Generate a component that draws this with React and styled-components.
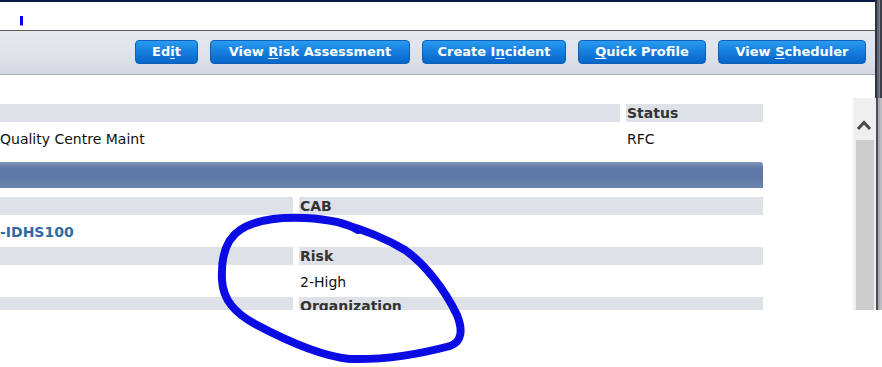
import React from "react";
import styled, { createGlobalStyle } from "styled-components";

const Global = createGlobalStyle`
  html, body { margin: 0; padding: 0; background: #ffffff; }
  body { font-family: "DejaVu Sans", Verdana, sans-serif; }
`;

const Screen = styled.div`
  position: relative;
  width: 882px;
  height: 367px;
  background: #ffffff;
  overflow: hidden;
`;

const Window = styled.div`
  display: flex;
  height: 310px;
  overflow: hidden;
`;

const Main = styled.div`
  width: 875px;
  display: flex;
  flex-direction: column;
  min-height: 0;
`;

const Edge = styled.div`
  position: relative;
  width: 7px;
  background: linear-gradient(to right, #f0f0f0 0 1px, #4a4d54 1px 3px, #a9acb2 3px 5px, #bcbec3 5px);
  &::before {
    content: "";
    position: absolute;
    left: 0;
    top: 0;
    width: 7px;
    height: 98px;
    background: linear-gradient(to right, #2e323c 0 2px, #5e6674 2px 4px, #7c8494 4px 5px, #3a3f4a 5px);
  }
`;

const TopBar = styled.div`
  flex-shrink: 0;
  box-sizing: content-box;
  height: 14px;
  border-top: 2px solid #0b1a47;
  display: flex;
  align-items: flex-start;
  padding: 14px 0 0 20px;
`;

const Caret = styled.span`
  display: block;
  width: 3px;
  height: 9px;
  background: #0000ff;
  box-shadow: 0 1px 0 #8a8aff;
`;

const Toolbar = styled.div`
  flex-shrink: 0;
  box-sizing: border-box;
  height: 45px;
  border-top: 1px solid #5a5a5e;
  border-bottom: 1px solid #b2b4bc;
  background: linear-gradient(to bottom, #e7e9f0 0%, #dfe1e9 60%, #d6d8e1 100%);
  display: flex;
  justify-content: flex-end;
  align-items: flex-start;
  gap: 12px;
  padding: 9px 9px 0 0;
`;

const Button = styled.button`
  width: ${(p) => p.$w}px;
  height: 24px;
  border: 1px solid #0d5fb8;
  border-radius: 4px;
  background: linear-gradient(to bottom, #2a9bf0 0%, #1680e0 45%, #0866c8 100%);
  color: #ffffff;
  font-family: "DejaVu Sans", Verdana, sans-serif;
  font-weight: bold;
  font-size: 13px;
  line-height: 22px;
  padding: 0;
  white-space: nowrap;
  text-align: center;
  u { text-decoration: underline; text-underline-offset: 2px; }
`;

const Content = styled.div`
  flex: 1;
  min-height: 0;
  display: flex;
  align-items: flex-start;
  overflow: hidden;
`;

const Table = styled.div`
  flex-shrink: 0;
  width: 763px;
  padding-top: 29px;
  display: flex;
  flex-direction: column;
`;

const Grid = styled.div`
  display: grid;
  grid-template-columns: ${(p) => p.$cols};
  column-gap: 6px;
`;

const HeadCell = styled.div`
  height: 18px;
  line-height: 18px;
  background: #dfe1e8;
  color: #333333;
  font-size: 14px;
  font-weight: bold;
  padding-left: ${(p) => (p.$first ? 0 : 1)}px;
  white-space: nowrap;
  overflow: hidden;
`;

const ValueCell = styled.div`
  height: ${(p) => p.$h}px;
  box-sizing: border-box;
  padding-top: 8px;
  padding-left: ${(p) => (p.$first ? 0 : 1)}px;
  line-height: 18px;
  font-size: 14px;
  color: #111111;
  white-space: nowrap;
`;

const LinkText = styled.span`
  color: #2f6ba3;
  font-weight: bold;
`;

const SectionBar = styled.div`
  height: 26px;
  margin-bottom: 9px;
  border-top-right-radius: 3px;
  background: linear-gradient(
    to bottom,
    #8196ba 0px,
    #7489b0 3px,
    #5f78a6 6px,
    #5f79a6 16px,
    #6b85ac 26px
  );
`;

const Scrollbar = styled.div`
  margin-left: auto;
  margin-top: 23px;
  width: 22px;
  align-self: stretch;
  display: flex;
  flex-direction: column;
  background: #efefef;
`;

const ArrowArea = styled.div`
  height: 42px;
  flex-shrink: 0;
  display: flex;
  align-items: flex-start;
  justify-content: center;
  padding-top: 21px;
  box-sizing: border-box;
`;

const Thumb = styled.div`
  flex: 1;
  margin: 0 1px 0 3px;
  background: #cdcdcd;
`;

const Annotation = styled.svg`
  position: absolute;
  left: 0;
  top: 0;
  pointer-events: none;
`;

const buttons = [
  { w: 63, label: <>Ed<u>i</u>t</> },
  { w: 200, label: <>View <u>R</u>isk Assessment</> },
  { w: 144, label: <>Create I<u>n</u>cident</> },
  { w: 128, label: <><u>Q</u>uick Profile</> },
  { w: 148, label: <>View <u>S</u>cheduler</> },
];

export default function App() {
  return (
    <>
      <Global />
      <Screen>
        <Window>
          <Main>
            <TopBar>
              <Caret />
            </TopBar>
            <Toolbar>
              {buttons.map((b, i) => (
                <Button key={i} $w={b.w}>
                  {b.label}
                </Button>
              ))}
            </Toolbar>
            <Content>
              <Table>
                <Grid $cols="620px 137px">
                  <HeadCell $first />
                  <HeadCell>Status</HeadCell>
                  <ValueCell $first $h={40}>Quality Centre Maint</ValueCell>
                  <ValueCell $h={40}>RFC</ValueCell>
                </Grid>
                <SectionBar />
                <Grid $cols="293px 464px">
                  <HeadCell $first />
                  <HeadCell>CAB</HeadCell>
                  <ValueCell $first $h={32}>
                    <LinkText>-IDHS100</LinkText>
                  </ValueCell>
                  <ValueCell $h={32} />
                  <HeadCell $first />
                  <HeadCell>Risk</HeadCell>
                  <ValueCell $first $h={32} />
                  <ValueCell $h={32}>2-High</ValueCell>
                  <HeadCell $first />
                  <HeadCell>Organization</HeadCell>
                </Grid>
              </Table>
              <Scrollbar>
                <ArrowArea>
                  <svg width="16" height="12" viewBox="0 0 16 12">
                    <path d="M2 10 L8 3.5 L14 10" fill="none" stroke="#4a4a4a" strokeWidth="3" />
                  </svg>
                </ArrowArea>
                <Thumb />
              </Scrollbar>
            </Content>
          </Main>
          <Edge />
        </Window>
        <Annotation width="882" height="367" viewBox="0 0 882 367">
          <path
            d="M 340 223 C 365 230, 385 238, 405 250 C 425 264, 445 290, 457 315 C 463 330, 462 342, 450 346 C 420 354, 385 360, 350 359 C 320 356, 285 340, 255 324 C 235 313, 223 300, 222 280 C 221 260, 225 240, 240 230 C 255 220, 280 217, 305 218 C 325 219, 345 222, 358 230"
            fill="none"
            stroke="#0b0be3"
            strokeWidth="8"
            strokeLinecap="round"
            strokeLinejoin="round"
          />
        </Annotation>
      </Screen>
    </>
  );
}
